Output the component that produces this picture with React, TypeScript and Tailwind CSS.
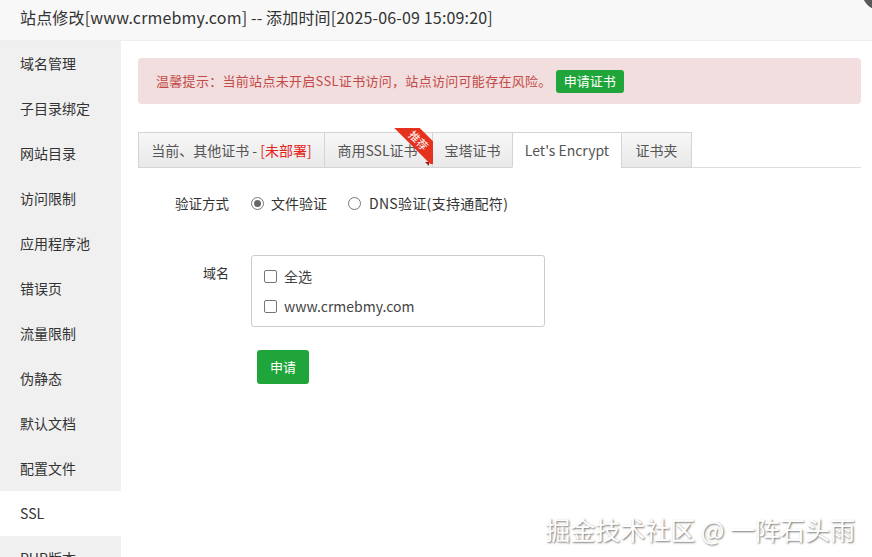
import React from "react";

const FONT = '"Noto Sans CJK SC", "Noto Sans", sans-serif';

const sideItems = [
  "域名管理",
  "子目录绑定",
  "网站目录",
  "访问限制",
  "应用程序池",
  "错误页",
  "流量限制",
  "伪静态",
  "默认文档",
  "配置文件",
  "SSL",
  "PHP版本",
];

function Radio({ checked }: { checked?: boolean }) {
  return (
    <span className="flex h-[13px] w-[13px] items-center justify-center rounded-full border border-[#767676] bg-white">
      {checked && <span className="h-[7px] w-[7px] rounded-full bg-[#666]" />}
    </span>
  );
}

function Check() {
  return <span className="block h-[13px] w-[13px] rounded-[2px] border border-[#767676] bg-white" />;
}

export default function App() {
  return (
    <div
      className="relative flex h-[557px] w-[872px] flex-col overflow-hidden bg-white text-[#333]"
      style={{ fontFamily: FONT }}
    >
      {/* title bar */}
      <div className="flex h-[41px] shrink-0 items-center border-b border-[#eee] bg-[#f8f8f8] pb-[7px] pl-5 text-[16px] tracking-[0.16px] text-[#333]">
        站点修改[www.crmebmy.com] -- 添加时间[2025-06-09 15:09:20]
      </div>
      <div className="absolute left-[862px] top-[-26px] h-[36px] w-[36px] rounded-full bg-[#5a5a5a]" />

      <div className="flex min-h-0 flex-1">
        {/* sidebar */}
        <div className="flex w-[121px] shrink-0 flex-col bg-[#f0f0f0]">
          {sideItems.map((t) => (
            <div
              key={t}
              className={`flex h-[45px] shrink-0 items-center pl-5 text-[14px] text-[#333] ${
                t === "SSL" ? "bg-white" : ""
              }`}
            >
              {t}
            </div>
          ))}
        </div>

        {/* main */}
        <div className="flex-1 pl-[17px] pr-[11px] pt-[17px]">
          <div className="flex h-[46px] items-center rounded-[4px] bg-[#f2dede] pl-[18px] text-[13px] tracking-[0.3px] text-[#c24a48]">
            温馨提示：当前站点未开启SSL证书访问，站点访问可能存在风险。
            <span className="ml-[4px] flex h-[23px] items-center rounded-[3px] bg-[#20a53a] px-[8px] text-[13px] tracking-normal text-white">
              申请证书
            </span>
          </div>

          {/* tabs */}
          <div className="mt-[28px] flex h-[36px] border-b border-[#ddd]">
            <div className="flex h-[36px] w-[187px] items-center justify-center border border-[#d4d4d4] bg-gradient-to-b from-[#f7f7f7] to-[#e9e9e9] text-[14px] text-[#555]">
              当前、其他证书 -&nbsp;<span className="text-[#e5231c]">[未部署]</span>
            </div>
            <div className="relative -ml-px flex h-[36px] w-[109px] items-center justify-center border border-[#d4d4d4] bg-gradient-to-b from-[#f7f7f7] to-[#e9e9e9] pr-[2px] text-[14px] text-[#555]">
              商用SSL证书
              <div className="absolute right-[3px] top-[29px] h-0 w-0 border-l-[4px] border-t-[4px] border-l-transparent border-t-[#9b1c10]" />
              <div className="absolute right-[-1px] top-[-5px] h-[36px] w-[46px] overflow-hidden">
                <div className="absolute left-[-1px] top-[3px] flex h-[18px] w-[66px] rotate-45 items-center justify-center bg-[#e5321e] text-[11px] leading-none text-white">
                  推荐
                </div>
              </div>
            </div>
            <div className="-ml-px flex h-[36px] w-[81px] items-center justify-center border border-[#d4d4d4] bg-gradient-to-b from-[#f7f7f7] to-[#e9e9e9] text-[14px] text-[#555]">
              宝塔证书
            </div>
            <div className="-ml-px flex h-[36px] w-[110px] items-center justify-center border border-[#d4d4d4] border-b-white bg-white text-[14px] text-[#555]">
              Let's Encrypt
            </div>
            <div className="-ml-px flex h-[36px] w-[71px] items-center justify-center border border-[#d4d4d4] bg-gradient-to-b from-[#f7f7f7] to-[#e9e9e9] text-[14px] text-[#555]">
              证书夹
            </div>
          </div>

          {/* form */}
          <div className="mt-[25px] flex items-center text-[13px]">
            <div className="w-[91px] text-right text-[13.5px] text-[#333]">验证方式</div>
            <div className="ml-[22px] flex items-center text-[14px]">
              <Radio checked />
              <span className="ml-[7px] text-[#333]">文件验证</span>
              <span className="ml-[21px]">
                <Radio />
              </span>
              <span className="ml-[8px] tracking-[0.3px] text-[#333]">DNS验证(支持通配符)</span>
            </div>
          </div>

          <div className="mt-[40px] flex text-[13px]">
            <div className="w-[91px] pt-[9px] text-right text-[#333]">域名</div>
            <div className="ml-[22px] mt-px flex h-[72px] w-[294px] flex-col justify-center gap-[9px] rounded-[3px] border border-[#ccc] pl-[12px]">
              <div className="flex items-center">
                <Check />
                <span className="ml-[7px] text-[14px] text-[#444]">全选</span>
              </div>
              <div className="flex items-center">
                <Check />
                <span className="ml-[7px] text-[14px] text-[#444]">www.crmebmy.com</span>
              </div>
            </div>
          </div>

          <div className="ml-[119px] mt-[23px] flex h-[34px] w-[52px] items-center justify-center rounded-[3px] bg-[#20a53a] text-[13px] text-white">
            申请
          </div>
        </div>
      </div>

      {/* watermark */}
      <div className="absolute bottom-[15px] right-[17px] text-[25px] leading-none text-white [text-shadow:1px_1px_2px_rgba(0,0,0,0.55)]">
        掘金技术社区 @ 一阵石头雨
      </div>
    </div>
  );
}
